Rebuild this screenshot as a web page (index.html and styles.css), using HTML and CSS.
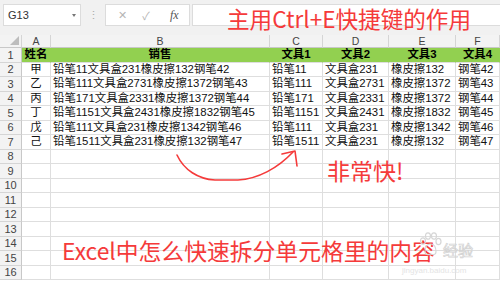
FILE: index.html
```html
<!DOCTYPE html>
<html lang="zh">
<head>
<meta charset="utf-8">
<title>Excel Ctrl+E</title>
<link rel="stylesheet" href="styles.css">
</head>
<body>
<div class="app">
  <div class="topbar">
    <div class="namebox"><span class="nb-text">G13</span><span class="nb-arrow"></span></div>
    <div class="dots">⋮</div>
    <div class="fxbox"><span class="fx-x">✕</span><span class="fx-ok">✓</span><span class="fx-f">fx</span></div>
    <div class="finput"></div>
  </div>
  <div class="sheet">
    <div class="ch corner"><span class="tri"></span></div>
    <div class="ch">A</div><div class="ch">B</div><div class="ch">C</div><div class="ch">D</div><div class="ch">E</div><div class="ch">F</div>

    <div class="rh">1</div>
    <div class="c hd ctr">姓名</div><div class="c hd ctr">销售</div><div class="c hd ctr">文具1</div><div class="c hd ctr">文具2</div><div class="c hd ctr">文具3</div><div class="c hd ctr">文具4</div>

    <div class="rh">2</div>
    <div class="c ctr">甲</div><div class="c">铅笔11文具盒231橡皮擦132钢笔42</div><div class="c">铅笔11</div><div class="c">文具盒231</div><div class="c">橡皮擦132</div><div class="c">钢笔42</div>

    <div class="rh">3</div>
    <div class="c ctr">乙</div><div class="c">铅笔111文具盒2731橡皮擦1372钢笔43</div><div class="c">铅笔111</div><div class="c">文具盒2731</div><div class="c">橡皮擦1372</div><div class="c">钢笔43</div>

    <div class="rh">4</div>
    <div class="c ctr">丙</div><div class="c">铅笔171文具盒2331橡皮擦1372钢笔44</div><div class="c">铅笔171</div><div class="c">文具盒2331</div><div class="c">橡皮擦1372</div><div class="c">钢笔44</div>

    <div class="rh">5</div>
    <div class="c ctr">丁</div><div class="c">铅笔1151文具盒2431橡皮擦1832钢笔45</div><div class="c">铅笔1151</div><div class="c">文具盒2431</div><div class="c">橡皮擦1832</div><div class="c">钢笔45</div>

    <div class="rh">6</div>
    <div class="c ctr">戊</div><div class="c">铅笔111文具盒231橡皮擦1342钢笔46</div><div class="c">铅笔111</div><div class="c">文具盒231</div><div class="c">橡皮擦1342</div><div class="c">钢笔46</div>

    <div class="rh">7</div>
    <div class="c ctr">己</div><div class="c">铅笔1511文具盒231橡皮擦132钢笔47</div><div class="c">铅笔1511</div><div class="c">文具盒231</div><div class="c">橡皮擦132</div><div class="c">钢笔47</div>

    <div class="rh">8</div><div class="c"></div><div class="c"></div><div class="c"></div><div class="c"></div><div class="c"></div><div class="c"></div>
    <div class="rh">9</div><div class="c"></div><div class="c"></div><div class="c"></div><div class="c"></div><div class="c"></div><div class="c"></div>
    <div class="rh">10</div><div class="c"></div><div class="c"></div><div class="c"></div><div class="c"></div><div class="c"></div><div class="c"></div>
    <div class="rh">11</div><div class="c"></div><div class="c"></div><div class="c"></div><div class="c"></div><div class="c"></div><div class="c"></div>
    <div class="rh">12</div><div class="c"></div><div class="c"></div><div class="c"></div><div class="c"></div><div class="c"></div><div class="c"></div>
    <div class="rh">13</div><div class="c"></div><div class="c"></div><div class="c"></div><div class="c"></div><div class="c"></div><div class="c"></div>
    <div class="rh">14</div><div class="c"></div><div class="c"></div><div class="c"></div><div class="c"></div><div class="c"></div><div class="c"></div>
    <div class="rh">15</div><div class="c"></div><div class="c"></div><div class="c"></div><div class="c"></div><div class="c"></div><div class="c"></div>
    <div class="rh">16</div><div class="c"></div><div class="c"></div><div class="c"></div><div class="c"></div><div class="c"></div><div class="c"></div>
  </div>

  <div class="note note-top">主用Ctrl+E快捷键的作用</div>
  <div class="note note-fast">非常快!</div>
  <div class="note note-bottom">Excel中怎么快速拆分单元格里的内容</div>

  <svg class="arrow" width="500" height="281" viewBox="0 0 500 281">
    <path d="M177,155 C184,170 198,179 215,180 L238,180 C258,179 278,168 293,152" fill="none" stroke="#f53a3a" stroke-width="1.6" stroke-linecap="round"/>
    <path d="M282,154 L295,151 L297,166" fill="none" stroke="#f53a3a" stroke-width="1.6" stroke-linecap="round" stroke-linejoin="round"/>
  </svg>

  <div class="wm">
    <svg class="paw" width="24" height="26" viewBox="0 0 24 26">
      <g fill="none" stroke="#d6d6d6" stroke-width="1.2">
        <ellipse cx="5" cy="9" rx="2.5" ry="3.2"/>
        <ellipse cx="10" cy="4" rx="2.5" ry="3.2"/>
        <ellipse cx="16" cy="4" rx="2.5" ry="3.2"/>
        <ellipse cx="20.5" cy="9.5" rx="2.5" ry="3.2"/>
        <path d="M7,20 C7,14 10,12 12.5,12 C15,12 18,14 18,20 C18,23 15,23 12.5,22 C10,23 7,23 7,20 Z"/>
      </g>
    </svg>
    <span class="wm-text">经验</span>
    <span class="wm-url">jingyan.baidu.com</span>
  </div>
</div>
</body>
</html>
```
FILE: styles.css
```css
* { box-sizing: border-box; }
html, body { margin: 0; padding: 0; background: #fff; }
body { width: 500px; height: 281px; overflow: hidden; font-family: "Liberation Sans", "Noto Sans CJK SC", sans-serif; }
.app { position: relative; width: 500px; height: 281px; overflow: hidden; }

.topbar {
  height: 35px;
  background: #f1f1f1;
  display: flex;
  align-items: flex-start;
  padding: 4px 0 0 3px;
}
.namebox {
  width: 78px; height: 22px;
  background: #fff;
  border: 1px solid #dcdcdc;
  display: flex; align-items: center; justify-content: space-between;
  padding: 0 4px 0 4px;
}
.nb-text { font-size: 11px; color: #333; }
.nb-arrow { width: 0; height: 0; border-left: 2.5px solid transparent; border-right: 2.5px solid transparent; border-top: 3px solid #777; }
.dots { width: 24px; height: 22px; text-align: center; font-size: 11px; line-height: 22px; color: #aaa; }
.fxbox {
  width: 85px; height: 22px;
  background: #fff;
  border: 1px solid #dcdcdc;
  display: flex; align-items: center;
  padding-left: 10px;
  gap: 12px;
  color: #b5b5b5;
}
.fx-x { font-size: 11px; width: 12px; text-align: center; }
.fx-ok { font-size: 11px; width: 12px; text-align: center; }
.fx-f { font-family: "Liberation Serif", serif; font-style: italic; font-size: 12px; color: #555; margin-left: 6px; }
.finput { flex: 1; height: 22px; margin-left: 2px; background: #fff; border: 1px solid #dcdcdc; border-right: none; }

.sheet {
  display: grid;
  grid-template-columns: 22px 29px 219px 53px 66px 67px 1fr;
  grid-template-rows: 13px repeat(16, 14.5px);
}
.ch {
  background: #f3f3f3;
  border-right: 1px solid #d5d5d5;
  border-bottom: 1px solid #c8c8c8;
  font-size: 10.5px; color: #444;
  display: flex; align-items: center; justify-content: center;
}
.corner { position: relative; }
.tri { position: absolute; right: 2px; bottom: 2px; width: 0; height: 0; border-left: 9px solid transparent; border-bottom: 9px solid #bdbdbd; }
.rh {
  background: #f3f3f3;
  border-right: 1px solid #c8c8c8;
  border-bottom: 1px solid #d5d5d5;
  font-size: 11px; color: #444;
  display: flex; align-items: center; justify-content: center;
}
.c {
  border-right: 1px solid #dedede;
  border-bottom: 1px solid #dedede;
  font-size: 11.4px; color: #111;
  white-space: nowrap; overflow: hidden;
  padding-left: 2px;
  display: flex; align-items: center;
  line-height: 1;
}
.ctr { justify-content: center; padding-left: 0; }
.hd { background: #92d050; font-weight: bold; border-color: #92d050; border-bottom-color: #dedede; color: #000; }

.note {
  position: absolute;
  font-family: "Noto Sans CJK SC", sans-serif;
  color: #f53a3a;
  line-height: 1;
  white-space: nowrap;
}
.note-top { left: 227px; top: 8px; font-size: 22.6px; }
.note-fast { left: 327px; top: 159px; font-size: 23px; }
.note-bottom { left: 62px; top: 240px; font-size: 22.8px; }

.arrow { position: absolute; left: 0; top: 0; pointer-events: none; }

.wm { position: absolute; left: 418px; top: 232px; width: 82px; height: 49px; }
.paw { position: absolute; left: 0; top: 0; }
.wm-text { position: absolute; left: 25px; top: 10px; font-family: "Noto Sans CJK SC", sans-serif; font-size: 15px; line-height: 1; color: transparent; -webkit-text-stroke: 0.7px #d2d2d2; }
.wm-url { position: absolute; left: -16px; top: 35px; font-size: 8px; line-height: 1; color: #e4e4e4; font-family: "Liberation Sans", sans-serif; }
```
